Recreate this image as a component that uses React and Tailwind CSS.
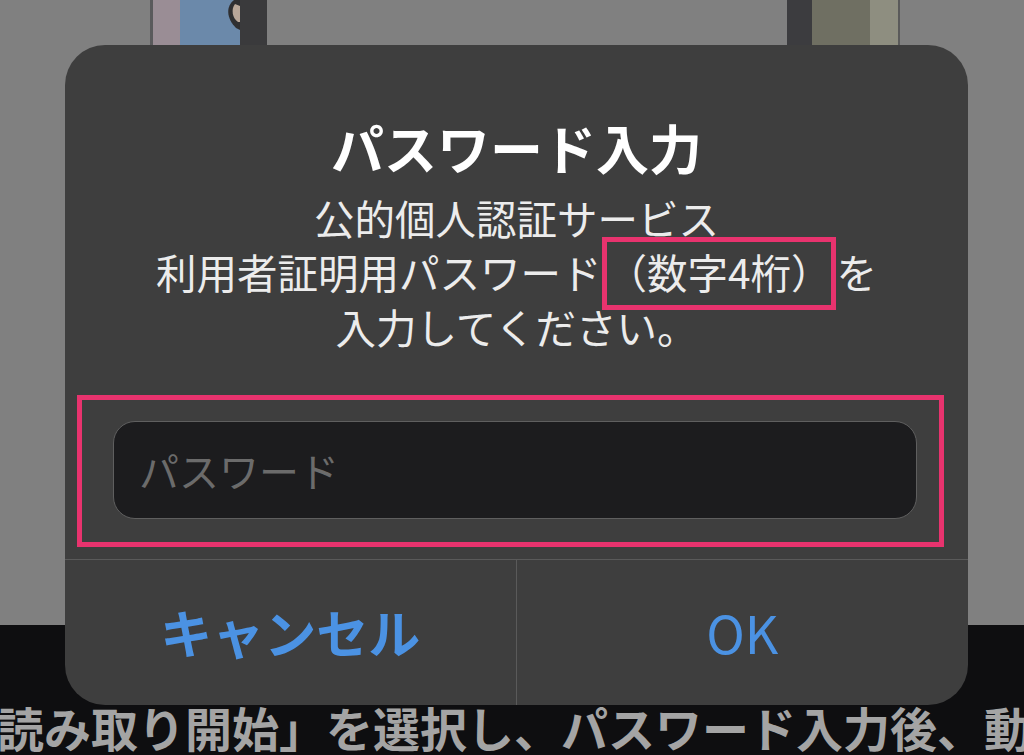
export default function App() {
  return (
    <div
      className="relative w-[1024px] h-[755px] overflow-hidden flex flex-col bg-[#808080]"
      style={{ fontFamily: '"Noto Sans CJK JP", "Noto Sans", sans-serif' }}
    >
      {/* background photo strip */}
      <div className="h-[625px] flex items-start">
        <div className="ml-[150px] h-[140px] flex">
          <div className="w-[3px] bg-[#5a5a5c]" />
          <div className="w-[27px] bg-[#9a8d95]" />
          <div className="w-[60px] bg-[#6b89aa] relative overflow-hidden">
            <svg viewBox="0 0 20 40" className="absolute right-0 top-0 w-[20px] h-[40px]">
              <path d="M14 0 C6 6 6 18 16 28 L20 30 L20 0 Z" fill="#2f2f31" />
              <path d="M15 4 C11 9 12 18 18 22 L20 22 L20 6 Z" fill="#b9a799" />
            </svg>
          </div>
          <div className="w-[27px] bg-[#3a3a3c]" />
        </div>
        <div className="ml-[520px] h-[140px] flex">
          <div className="w-[25px] bg-[#3c3c3f]" />
          <div className="w-[58px] bg-[#6f6f62]" />
          <div className="w-[28px] bg-[#8e8e80]" />
          <div className="w-[2px] bg-[#5a5a5a]" />
        </div>
      </div>

      {/* caption bar */}
      <div className="flex-1 bg-[#0e0e10] overflow-hidden pt-[78px]">
        <p className="-ml-[3px] whitespace-nowrap text-[47px] leading-[47px] font-bold text-[#a4a4a4]">
          読み取り開始」を選択し、パスワード入力後、動
        </p>
      </div>

      {/* alert dialog */}
      <div className="absolute left-[65px] top-[45px] w-[903px] h-[660px] rounded-[40px] bg-[#3e3e3e] flex flex-col overflow-hidden">
        <div className="pt-[72px] flex flex-col items-center">
          <h1 className="text-[53px] leading-[60px] font-bold text-white">
            パスワード入力
          </h1>
          <p className="mt-[14px] text-center text-[40.5px] leading-[54px] text-[#ececec]">
            公的個人認証サービス
            <br />
            利用者証明用パスワード
            <span className="inline-block -my-[10px] h-[73px] leading-[60px] border-[5px] border-[#e8336e] align-baseline">
              （数字4桁）
            </span>
            を
            <br />
            入力してください。
          </p>
        </div>

        <div className="mt-[41px] ml-[12px] w-[867px] h-[152px] border-[5px] border-[#e8336e] pl-[31px] pt-[21px]">
          <input
            type="password"
            placeholder="パスワード"
            className="w-[804px] h-[98px] rounded-[22px] bg-[#1c1c1e] border-[1.5px] border-[#5f5f5f] px-[25px] text-[40px] text-white placeholder:text-[#6b6b6b] outline-none"
          />
        </div>

        <div className="mt-[12px] flex-1 flex border-t border-[#5a5a5a]">
          <button className="w-1/2 flex items-center justify-center border-r border-[#5a5a5a] text-[52px] font-bold text-[#4b92e3] pb-[2px]">
            キャンセル
          </button>
          <button className="w-1/2 flex items-center justify-center text-[52px] text-[#4b92e3] pb-[2px]">
            OK
          </button>
        </div>
      </div>
    </div>
  );
}
